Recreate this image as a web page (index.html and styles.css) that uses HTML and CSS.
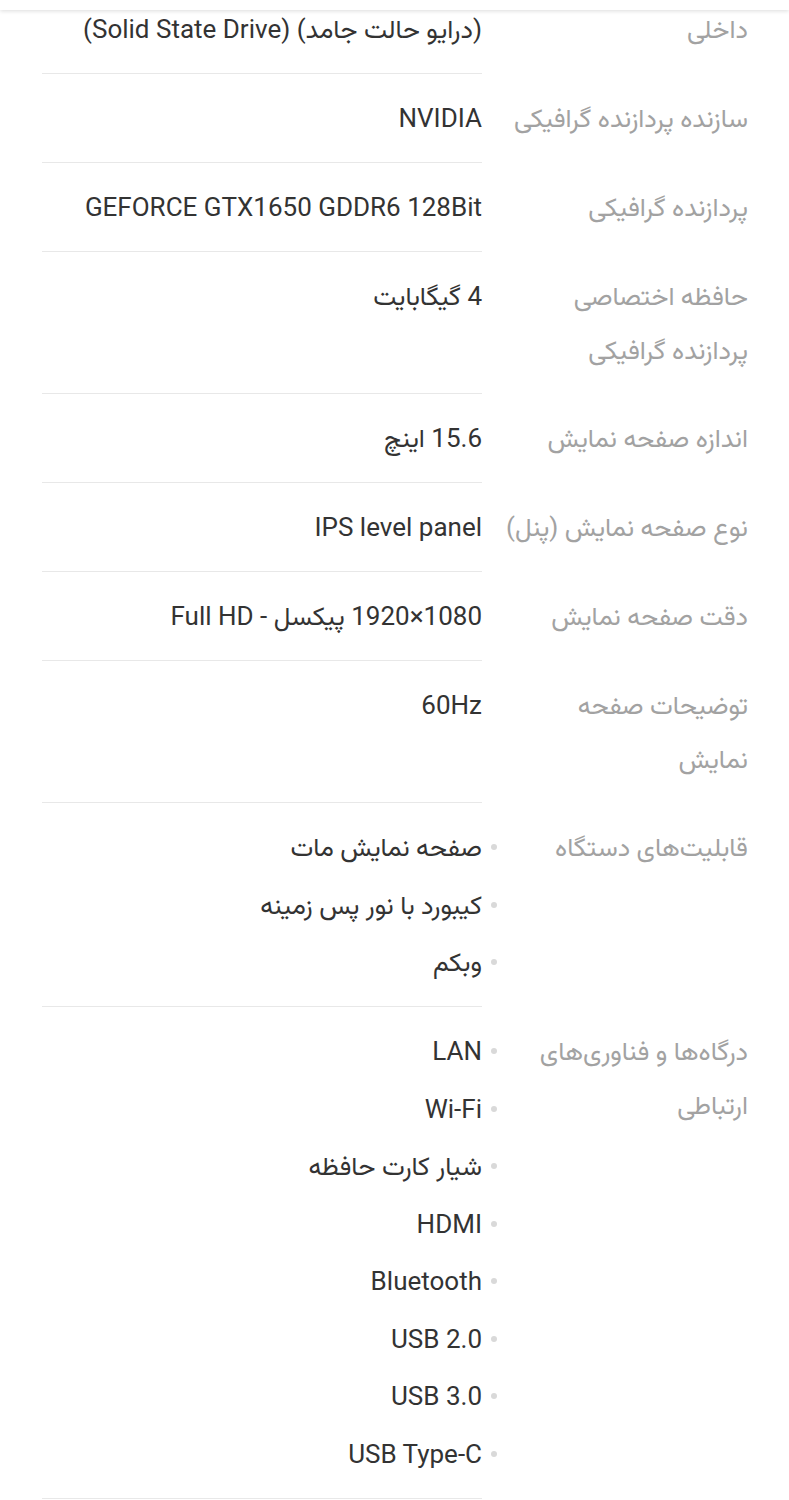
FILE: index.html
```html
<!DOCTYPE html>
<html lang="fa" dir="rtl">
<head>
<meta charset="utf-8">
<title>مشخصات</title>
<link rel="stylesheet" href="styles.css">
</head>
<body>
<div class="topbar"></div>
<dl class="specs">
  <div class="row">
    <dt class="label">داخلی</dt>
    <dd class="value">(درایو حالت جامد) (Solid State Drive)</dd>
  </div>
  <div class="row">
    <dt class="label">سازنده پردازنده گرافیکی</dt>
    <dd class="value">NVIDIA</dd>
  </div>
  <div class="row">
    <dt class="label">پردازنده گرافیکی</dt>
    <dd class="value">GEFORCE GTX1650 GDDR6 128Bit</dd>
  </div>
  <div class="row">
    <dt class="label">حافظه اختصاصی پردازنده گرافیکی</dt>
    <dd class="value">4 گیگابایت</dd>
  </div>
  <div class="row">
    <dt class="label">اندازه صفحه نمایش</dt>
    <dd class="value">15.6 اینچ</dd>
  </div>
  <div class="row">
    <dt class="label">نوع صفحه نمایش (پنل)</dt>
    <dd class="value">IPS level panel</dd>
  </div>
  <div class="row">
    <dt class="label">دقت صفحه نمایش</dt>
    <dd class="value"><bdi dir="ltr">1920×1080</bdi> پیکسل - Full HD</dd>
  </div>
  <div class="row">
    <dt class="label">توضیحات صفحه نمایش</dt>
    <dd class="value">60Hz</dd>
  </div>
  <div class="row">
    <dt class="label">قابلیت‌های دستگاه</dt>
    <dd class="value">
      <ul class="bullets">
        <li>صفحه نمایش مات</li>
        <li>کیبورد با نور پس زمینه</li>
        <li>وبکم</li>
      </ul>
    </dd>
  </div>
  <div class="row">
    <dt class="label">درگاه‌ها و فناوری‌های ارتباطی</dt>
    <dd class="value">
      <ul class="bullets">
        <li>LAN</li>
        <li>Wi-Fi</li>
        <li>شیار کارت حافظه</li>
        <li>HDMI</li>
        <li>Bluetooth</li>
        <li>USB 2.0</li>
        <li>USB 3.0</li>
        <li>USB Type-C</li>
      </ul>
    </dd>
  </div>
</dl>
</body>
</html>
```

FILE: styles.css
```css
html, body {
  margin: 0;
  padding: 0;
  background: #ffffff;
}

body {
  font-family: Roboto, "Vazirmatn", "Noto Sans Arabic", "DejaVu Sans", sans-serif;
  font-size: 26px;
  overflow: hidden;
}

.topbar {
  position: fixed;
  top: 0;
  left: 0;
  right: 0;
  height: 10px;
  background: #ffffff;
  box-shadow: 0 1px 4px rgba(0, 0, 0, 0.14);
  z-index: 2;
}

.specs {
  margin: -15px 0 0 0;
  padding: 0 41px 0 42px;
}

.row {
  display: flex;
  flex-direction: row;
}

.label {
  width: 242px;
  margin: 0 0 0 24px;
  padding: 17px 0;
  line-height: 54px;
  color: #a2a2a2;
  flex: none;
}

.value {
  flex: 1;
  margin: 0;
  padding: 17px 0;
  line-height: 54px;
  color: #333333;
  border-bottom: 1px solid #e8e8e8;
}

.bullets {
  list-style: none;
  margin: 0;
  padding: 0;
}

.bullets li {
  position: relative;
}

.bullets li + li {
  margin-top: 3.5px;
}

.bullets li::before {
  content: "";
  position: absolute;
  right: -15px;
  top: 50%;
  width: 6px;
  height: 6px;
  margin-top: -3px;
  border-radius: 50%;
  background: #d9d9d9;
}
```
